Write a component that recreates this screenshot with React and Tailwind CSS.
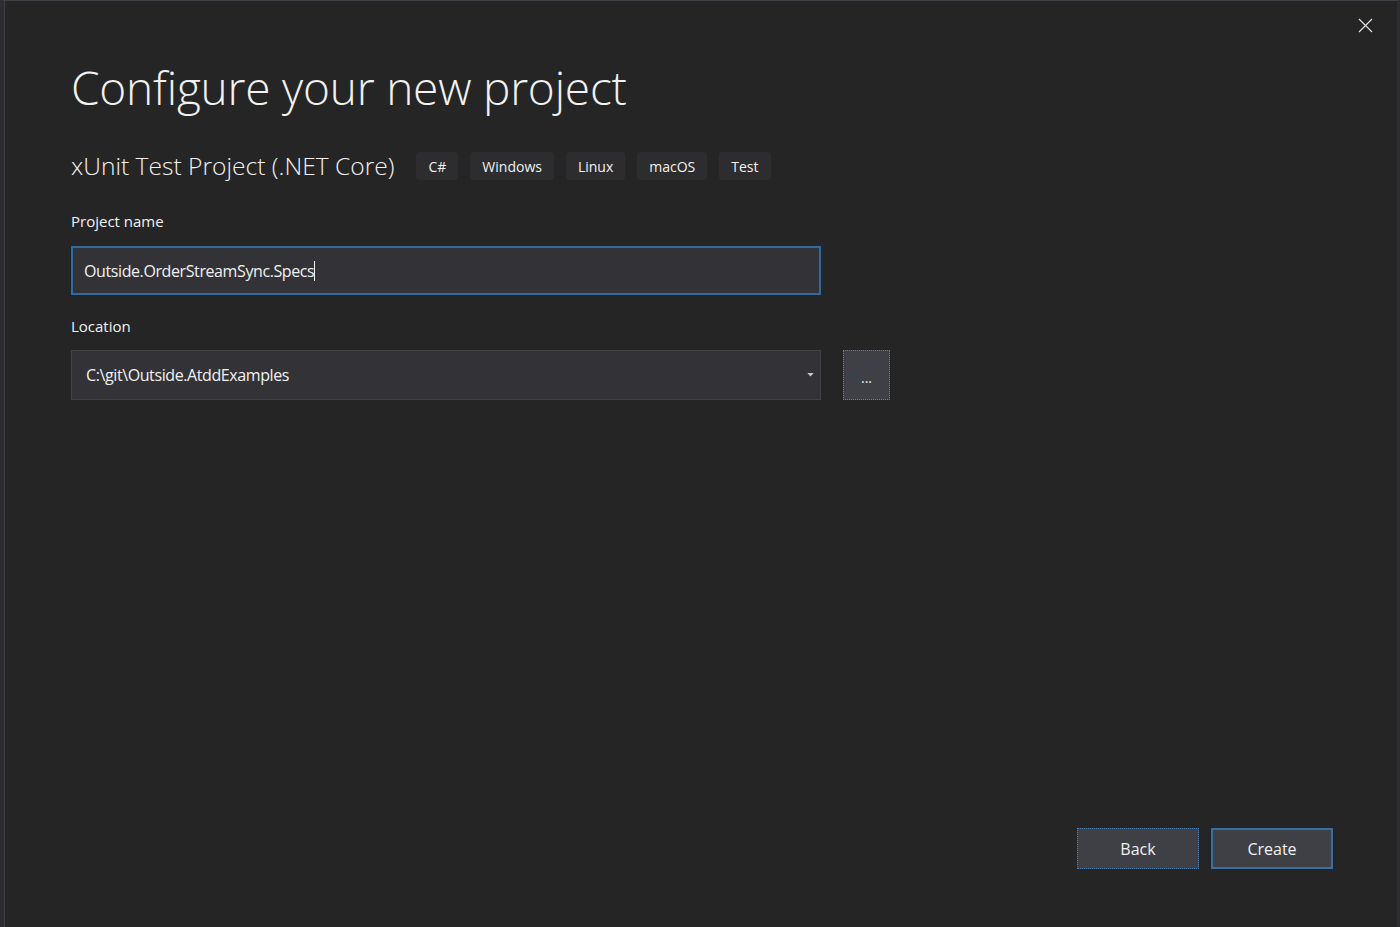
import React from "react";

export default function App() {
  const font = { fontFamily: '"Open Sans", "Noto Sans", "Liberation Sans", sans-serif' };
  return (
    <div
      style={font}
      className="relative w-[1400px] h-[927px] overflow-hidden bg-[#252526] text-[#f1f1f1] border-t border-t-[#3f3f46] border-l-[4px] border-l-[#2d2d30] border-r-[3px] border-r-[#2d2d30]"
    >
      <div className="absolute left-0 top-0 h-full w-px bg-[#3f3f46]" />
      <button className="absolute right-[24px] top-[16px] w-[16px] h-[16px] flex items-center justify-center text-[#e0e0e0]">
        <svg width="15" height="15" viewBox="0 0 15 15" fill="none" stroke="currentColor" strokeWidth="1.2">
          <path d="M1 1 L14 14 M14 1 L1 14" />
        </svg>
      </button>

      <div className="flex flex-col h-full pl-[67px]">
        <h1 className="mt-[58px] text-[46px] leading-[56px] font-light tracking-[-0.2px] text-[#f1f1f1]">
          Configure your new project
        </h1>

        <div className="mt-[36px] flex items-center h-[30px]">
          <span className="text-[24.6px] leading-[30px] font-light text-[#f1f1f1] mr-[22px]">
            xUnit Test Project (.NET Core)
          </span>
          <div className="flex gap-[12px]">
            {["C#", "Windows", "Linux", "macOS", "Test"].map((t) => (
              <span
                key={t}
                className="h-[28px] px-[12px] flex items-center rounded-[4px] bg-[#2d2d30] text-[14px] text-[#f1f1f1]"
              >
                {t}
              </span>
            ))}
          </div>
        </div>

        <label className="mt-[30px] text-[15px] leading-[20px] text-[#f1f1f1]">Project name</label>
        <div className="mt-[15px] w-[750px] h-[49px] border-2 border-[#2f6b9f] bg-[#333337] flex items-center pl-[11px]">
          <span className="text-[16px] text-[#f1f1f1] tracking-[-0.4px]">Outside.OrderStreamSync.Specs</span>
          <span className="w-px h-[20px] bg-[#f1f1f1]" />
        </div>

        <label className="mt-[21px] text-[15px] leading-[20px] text-[#f1f1f1]">Location</label>
        <div className="mt-[14px] flex items-center gap-[22px]">
          <div className="w-[750px] h-[50px] border border-[#434346] bg-[#333337] flex items-center pl-[14px] pr-[6px]">
            <span className="flex-1 text-[16px] text-[#f1f1f1] tracking-[-0.4px]">C:\git\Outside.AtddExamples</span>
            <svg width="7" height="4" viewBox="0 0 8 5" className="text-[#c8c8c8]">
              <path d="M0 0 L8 0 L4 4.5 Z" fill="currentColor" />
            </svg>
          </div>
          <button className="w-[47px] h-[50px] bg-[#3f3f46] border border-dotted border-[#3a8ac9] flex items-center justify-center text-[14px] leading-none text-[#f1f1f1] pt-[6px]">
            ...
          </button>
        </div>

        <div className="flex-1" />

        <div className="flex justify-end gap-[12px] pr-[64px] pb-[58px]">
          <button className="w-[122px] h-[41px] bg-[#3f3f46] border border-dotted border-[#4f7fae] text-[16px] text-[#f1f1f1]">
            Back
          </button>
          <button className="w-[122px] h-[41px] bg-[#3f3f46] border-2 border-[#3470a6] text-[16px] text-[#f1f1f1]">
            Create
          </button>
        </div>
      </div>
    </div>
  );
}
